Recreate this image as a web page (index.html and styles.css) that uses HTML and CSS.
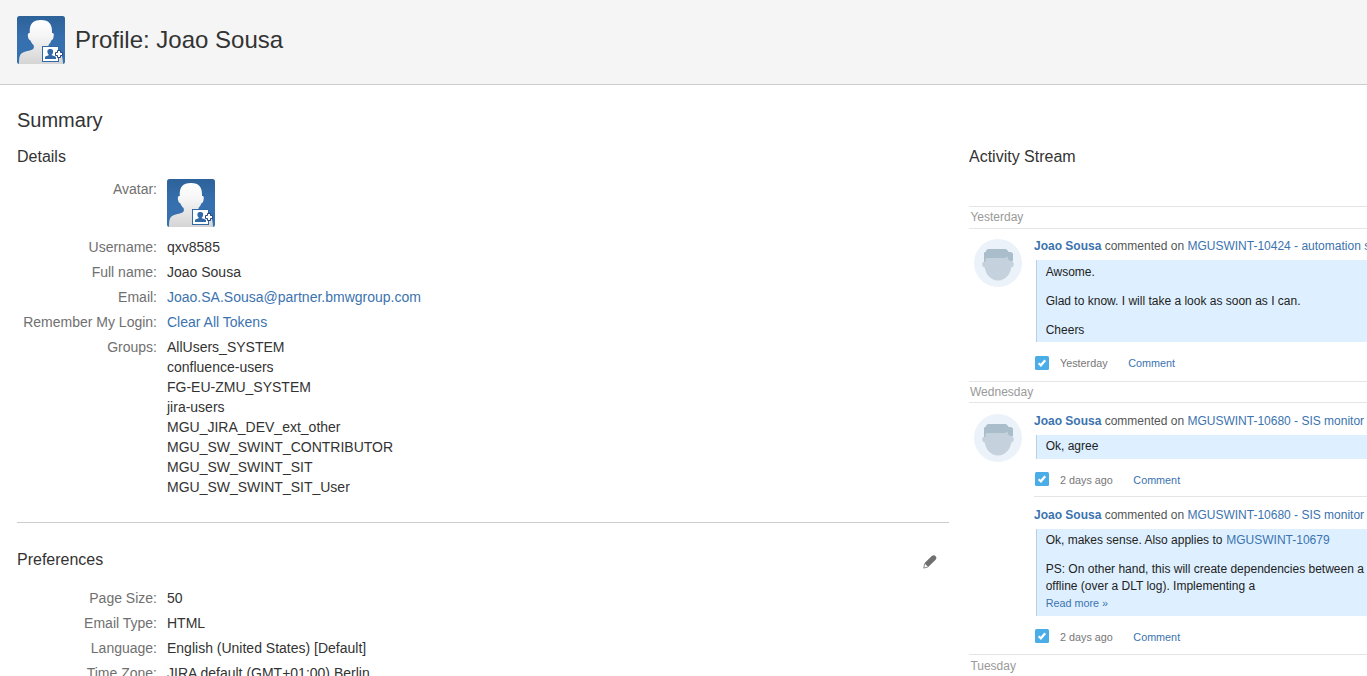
FILE: index.html
```
<!DOCTYPE html>
<html lang="en">
<head>
<meta charset="utf-8">
<title>Profile: Joao Sousa</title>
<link rel="stylesheet" href="styles.css">
</head>
<body>

<!-- shared drawings -->
<svg class="defs" width="0" height="0">
  <defs>
    <linearGradient id="blue" x1="0" y1="0" x2="0" y2="1">
      <stop offset="0" stop-color="#2d6299"/>
      <stop offset=".45" stop-color="#366fad"/>
      <stop offset="1" stop-color="#3672b0"/>
    </linearGradient>
    <linearGradient id="person" x1="0" y1="0" x2="0" y2="1">
      <stop offset="0" stop-color="#fff"/>
      <stop offset=".35" stop-color="#f6f6f6"/>
      <stop offset="1" stop-color="#d4d4d4"/>
    </linearGradient>
    <clipPath id="round"><rect width="48" height="48" rx="2.5"/></clipPath>
  </defs>
  <symbol id="avatar" viewBox="0 0 48 48">
    <g clip-path="url(#round)">
      <rect width="48" height="48" fill="url(#blue)"/>
      <path fill="url(#person)" d="M2 48C2 42 2.500 38 6 36.500C9 35 15.500 34.500 16.500 32.500C17 31.500 17 30 16.500 29C15 27.500 14 26 13.300 24.200C11.300 24 10.300 19 11.200 17.500C11.600 16.800 12.300 16.800 12.800 17C12.300 8 15.500 4 24 4C32 4 35.500 8 35 17C36 16.800 36.800 17.300 36.800 19C36.600 22 35.800 24 34.500 24.200C33.800 26 32.800 27.500 31.500 29V32C33 35 39 35 42 36.500C45 38 46 43 46 48Z"/>
      <rect x="25.500" y="30.500" width="16" height="15" fill="#fff" stroke="#3268a5"/>
      <path fill="#3268a5" d="M28 43V41.500C28 40 31 40 32 39C31 38 30 37 30.500 34.500C31 32.500 35.500 32.500 36 34.500C36.500 37 35.500 38 34.500 39C35.500 40 39 40 39 41.500V43Z"/>
      <path fill="#fff" stroke="#24467f" d="M40.500 34.500H43.500V36.500H45.500V39.500H43.500V41.500H40.500V39.500H38.500V36.500H40.500Z"/>
    </g>
  </symbol>
  <symbol id="face" viewBox="0 0 48 48">
    <circle cx="24" cy="24" r="24" fill="#ebf2f9"/>
    <path fill="#c5d2dd" d="M10 17H38V23C39.500 22.500 40 24 39.800 25.500C39.500 27.500 38.500 28.300 37.300 28.500C36 36 31 41.500 24 41.500C17 41.500 12 36 10.700 28.500C9.500 28.300 8.300 27.500 8.200 25.500C8 24 8.500 22.500 10 23Z"/>
    <path fill="#a9bdcb" d="M10 23V13.500L12 12.700V11.500L14 10H32L34 12L34.500 13H37L39 14.500V22L37.500 22.500L34 20.500V18.500L33 17.500L31.500 19H13L11.500 20V23Z"/>
  </symbol>
  <symbol id="task" viewBox="0 0 14 14">
    <rect width="14" height="14" rx="1.500" fill="#4bade8"/>
    <path fill="none" stroke="#fff" stroke-width="2.200" d="M3.600 7.200L5.900 9.300L10.200 4.300"/>
  </symbol>
</svg>

<header class="page-header">
  <svg class="avatar"><use href="#avatar"/></svg>
  <h1>Profile: Joao Sousa</h1>
</header>

<main class="content">
  <h2>Summary</h2>
  <div class="columns">
    <div class="column">
      <section class="module">
        <h3>Details</h3>
        <dl class="details">
          <dt>Avatar:</dt><dd><svg class="avatar"><use href="#avatar"/></svg></dd>
          <dt>Username:</dt><dd>qxv8585</dd>
          <dt>Full name:</dt><dd>Joao Sousa</dd>
          <dt>Email:</dt><dd><a href="#">Joao.SA.Sousa@partner.bmwgroup.com</a></dd>
          <dt>Remember My Login:</dt><dd><a href="#">Clear All Tokens</a></dd>
          <dt>Groups:</dt>
          <dd>
            <ul class="groups">
              <li>AllUsers_SYSTEM</li>
              <li>confluence-users</li>
              <li>FG-EU-ZMU_SYSTEM</li>
              <li>jira-users</li>
              <li>MGU_JIRA_DEV_ext_other</li>
              <li>MGU_SW_SWINT_CONTRIBUTOR</li>
              <li>MGU_SW_SWINT_SIT</li>
              <li>MGU_SW_SWINT_SIT_User</li>
            </ul>
          </dd>
        </dl>
      </section>
      <section class="module preferences">
        <div class="module-head">
          <h3>Preferences</h3>
          <svg class="edit" viewBox="0 0 14 14"><path fill="#707070" d="M8.500 1.300C10 0 11.500 0 12.600 1.200C13.700 2.300 13.700 3.700 12.400 5L5.200 12L1.400 8.200Z"/><path fill="none" stroke="#707070" stroke-width=".8" d="M1.700 8.800L.7 13.100L4.900 12"/></svg>
        </div>
        <dl class="details">
          <dt>Page Size:</dt><dd>50</dd>
          <dt>Email Type:</dt><dd>HTML</dd>
          <dt>Language:</dt><dd>English (United States) [Default]</dd>
          <dt>Time Zone:</dt><dd>JIRA default (GMT+01:00) Berlin</dd>
        </dl>
      </section>
    </div>

    <div class="column stream">
      <h3>Activity Stream</h3>
      <h4 class="day">Yesterday</h4>
      <div class="day-items first">
        <svg class="avatar"><use href="#face"/></svg>
        <div class="items">
          <article class="item">
            <p class="item-title"><a class="user" href="#">Joao Sousa</a> commented on <a href="#">MGUSWINT-10424 - automation setup</a></p>
            <blockquote>
              <p>Awsome.</p>
              <p>Glad to know. I will take a look as soon as I can.</p>
              <p>Cheers</p>
            </blockquote>
            <div class="item-info"><svg class="task"><use href="#task"/></svg><span class="time">Yesterday</span><a href="#">Comment</a></div>
          </article>
        </div>
      </div>
      <h4 class="day">Wednesday</h4>
      <div class="day-items">
        <svg class="avatar"><use href="#face"/></svg>
        <div class="items">
          <article class="item">
            <p class="item-title"><a class="user" href="#">Joao Sousa</a> commented on <a href="#">MGUSWINT-10680 - SIS monitor</a></p>
            <blockquote>
              <p>Ok, agree</p>
            </blockquote>
            <div class="item-info"><svg class="task"><use href="#task"/></svg><span class="time">2 days ago</span><a href="#">Comment</a></div>
          </article>
          <article class="item">
            <p class="item-title"><a class="user" href="#">Joao Sousa</a> commented on <a href="#">MGUSWINT-10680 - SIS monitor</a></p>
            <blockquote>
              <p>Ok, makes sense. Also applies to <a href="#">MGUSWINT-10679</a></p>
              <p>PS: On other hand, this will create dependencies between a<br>offline (over a DLT log). Implementing a</p>
              <a class="more" href="#">Read more »</a>
            </blockquote>
            <div class="item-info"><svg class="task"><use href="#task"/></svg><span class="time">2 days ago</span><a href="#">Comment</a></div>
          </article>
        </div>
      </div>
      <h4 class="day">Tuesday</h4>
    </div>
  </div>
</main>

</body>
</html>
```

FILE: styles.css
```
* { box-sizing: border-box; }

body, h1, h2, h3, h4, p, dl, dd, ul, blockquote {
  margin: 0;
  padding: 0;
  font-weight: normal;
}

body {
  height: 676px;
  overflow: hidden;
  background: #fff;
  color: #333;
  font: 14px/20px "Liberation Sans", Arial, sans-serif;
}

a { color: #3b73af; text-decoration: none; }

svg { display: block; flex: none; }
.defs { position: absolute; }
.avatar { width: 48px; height: 48px; }

/* header */
.page-header {
  display: flex;
  gap: 10px;
  height: 85px;
  padding: 16px 17px;
  background: #f5f5f5;
  border-bottom: 1px solid #ccc;
}
.page-header h1 { font-size: 24px; line-height: 48px; }

.content { padding: 20px 0 0 17px; }
h2 { font-size: 20px; line-height: 30px; }
h3 { font-size: 16px; line-height: 24px; }

.columns {
  display: grid;
  grid-template-columns: 932px minmax(0, 1fr);
  column-gap: 20px;
  padding-top: 10px;
}

/* label / value lists */
.details {
  display: grid;
  grid-template-columns: 140px 1fr;
  column-gap: 10px;
  row-gap: 5px;
  padding-top: 10px;
}
.details dt { color: #707070; text-align: right; white-space: nowrap; }
.details .avatar { margin-bottom: 5px; }
.groups { list-style: none; }

.preferences {
  margin-top: 25px;
  padding-top: 25px;
  border-top: 1px solid #ccc;
}
.preferences .details { padding-top: 16px; }
.module-head {
  display: flex;
  justify-content: space-between;
  padding-right: 12px;
}
.edit { width: 14px; height: 14px; margin-top: 7px; }

/* activity stream */
.stream {
  overflow: hidden;
  font-size: 12px;
  line-height: 17px;
  white-space: nowrap;
}
.stream h3 { margin-bottom: 37px; }
.day {
  height: 23px;
  padding: 2px 1.4px 0;
  border-top: 1px solid #e5e5e5;
  border-bottom: 1px solid #e5e5e5;
  color: #999;
  font-size: 12px;
}
.day-items + .day { height: 22px; padding-left: 1px; }
.day-items + .day:last-child { height: 23px; padding: 3px 1.4px 0; }
.day-items { display: flex; gap: 12px; padding-left: 5px; }
.day-items > .avatar { margin-top: 11px; }
.first > .avatar { margin-top: 10px; }
.items { flex: 1; min-width: 0; }
.item { padding-top: 10px; }
.item + .item { border-top: 1px solid #e5e5e5; }
.first .item { padding-top: 9px; }
.item-title { color: #555; }
.user { font-weight: bold; }

blockquote {
  margin: 5px 0 0 2px;
  padding: 3px 9px 4px 8.7px;
  background: #def0ff;
  border-left: 1px solid #b5d0ea;
  color: #222;
}
.first blockquote { padding-top: 4px; padding-bottom: 3px; }
blockquote p + p { margin-top: 12px; }
blockquote p a { margin-left: .5px; }
.more { display: block; font-size: 10.8px; }

.item-info {
  display: flex;
  height: 38px;
  padding: 13px 0 0 1px;
  font-size: 10.8px;
}
.item:not(:last-child) .item-info { height: 37px; }
.first .item-info { height: 39px; }
.task { width: 14px; height: 14px; margin-right: 11px; }
.first .task { margin-top: 1px; }
.time { margin-right: 20.5px; color: #777; }
```
